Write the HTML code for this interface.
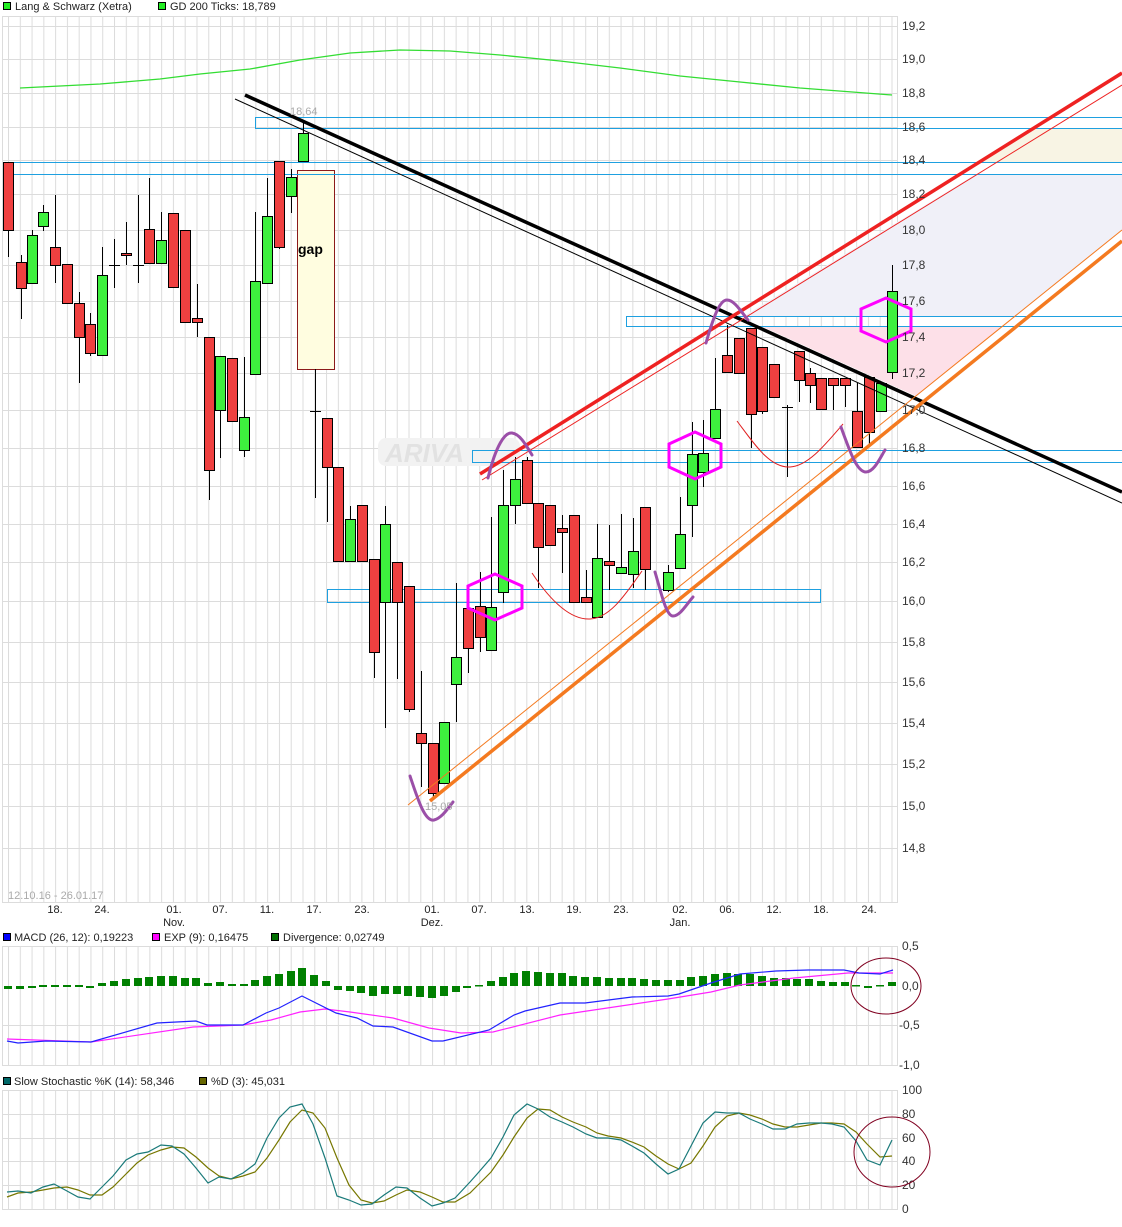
<!DOCTYPE html>
<html><head><meta charset="utf-8">
<style>
html,body{margin:0;padding:0;background:#fff;width:1122px;height:1227px;overflow:hidden}
svg{display:block}
text{font-family:"Liberation Sans",Arial,sans-serif}
</style></head>
<body>
<svg width="1122" height="1227" viewBox="0 0 1122 1227" xmlns="http://www.w3.org/2000/svg">
<defs>
<pattern id="vg" patternUnits="userSpaceOnUse" x="8" y="0" width="11.78" height="10">
<line x1="0.5" y1="0" x2="0.5" y2="10" stroke="#dcdcdc" stroke-width="1"/>
</pattern>
</defs>
<rect width="1122" height="1227" fill="#fff"/>

<!-- legend top -->
<rect x="3.5" y="2.5" width="7" height="7" fill="#22ee22" stroke="#000"/>
<text x="15" y="10" font-size="11" fill="#222">Lang &amp; Schwarz (Xetra)</text>
<rect x="158.5" y="2.5" width="7" height="7" fill="#22ee22" stroke="#000"/>
<text x="170" y="10" font-size="11" fill="#222">GD 200 Ticks: 18,789</text>

<!-- main grid -->
<rect x="2" y="16" width="896" height="886" fill="url(#vg)"/>
<g stroke="#dcdcdc" stroke-width="1">
<line x1="2" y1="16.5" x2="898" y2="16.5"/>
<line x1="2" y1="26.5" x2="898" y2="26.5"/><line x1="2" y1="59.5" x2="898" y2="59.5"/><line x1="2" y1="93.5" x2="898" y2="93.5"/><line x1="2" y1="127.5" x2="898" y2="127.5"/><line x1="2" y1="160.5" x2="898" y2="160.5"/><line x1="2" y1="194.5" x2="898" y2="194.5"/><line x1="2" y1="230.5" x2="898" y2="230.5"/><line x1="2" y1="265.5" x2="898" y2="265.5"/><line x1="2" y1="301.5" x2="898" y2="301.5"/><line x1="2" y1="337.5" x2="898" y2="337.5"/><line x1="2" y1="373.5" x2="898" y2="373.5"/><line x1="2" y1="410.5" x2="898" y2="410.5"/><line x1="2" y1="448.5" x2="898" y2="448.5"/><line x1="2" y1="486.5" x2="898" y2="486.5"/><line x1="2" y1="524.5" x2="898" y2="524.5"/><line x1="2" y1="562.5" x2="898" y2="562.5"/><line x1="2" y1="601.5" x2="898" y2="601.5"/><line x1="2" y1="642.5" x2="898" y2="642.5"/><line x1="2" y1="682.5" x2="898" y2="682.5"/><line x1="2" y1="723.5" x2="898" y2="723.5"/><line x1="2" y1="764.5" x2="898" y2="764.5"/><line x1="2" y1="806.5" x2="898" y2="806.5"/><line x1="2" y1="848.5" x2="898" y2="848.5"/>
<line x1="2" y1="902.5" x2="898" y2="902.5"/>
<line x1="2.5" y1="16" x2="2.5" y2="902"/><line x1="897.5" y1="16" x2="897.5" y2="902"/>
</g>

<!-- shaded zones -->
<polygon points="1034,128 1122,128 1122,163 978,163" fill="#f8f4e4"/>
<polygon points="976,174 1122,174 1122,230 1015,316 744,316" fill="#f0f0f8"/>
<polygon points="763,327 1002,327 916,396" fill="#fde0e8"/>

<!-- gap box -->
<rect x="297.5" y="170.5" width="37" height="199" fill="#fffde0" stroke="#8b1a1a" stroke-width="1"/>
<text x="298" y="254" font-size="14" font-weight="bold" fill="#000">gap</text>

<!-- ARIVA watermark -->
<rect x="378" y="438" width="142" height="28" rx="8" fill="#f2f2f2"/>
<text x="385" y="462" font-size="26" font-weight="bold" font-style="italic" fill="#e2e2e2">ARIVA</text>

<!-- blue S/R boxes -->
<g fill="none" stroke="#1ea0e0" stroke-width="1">
<rect x="255.5" y="117.5" width="867" height="11"/>
<line x1="3" y1="162.5" x2="1122" y2="162.5"/><line x1="3" y1="174.5" x2="1122" y2="174.5"/><line x1="3.5" y1="162" x2="3.5" y2="175"/>
<rect x="626.5" y="316.5" width="496" height="10"/>
<rect x="472.5" y="450.5" width="650" height="12"/>
<rect x="327.5" y="589.5" width="493" height="13"/>
</g>

<!-- GD200 -->
<polyline fill="none" stroke="#33dd33" stroke-width="1.3" points="20,88 100,84 160,79 200,74 250,69 300,60 350,53 400,50 450,51 500,55 560,61 620,68 680,76 740,82 800,88 892,95"/>

<!-- candles -->
<g stroke="#000" stroke-width="1">
<!-- wicks -->
<line x1="8.5" y1="162" x2="8.5" y2="257"/>
<line x1="21.5" y1="255" x2="21.5" y2="319"/>
<line x1="32.5" y1="230" x2="32.5" y2="283"/>
<line x1="43.5" y1="205" x2="43.5" y2="231"/>
<line x1="55.5" y1="195" x2="55.5" y2="283"/>
<line x1="79.5" y1="292" x2="79.5" y2="383"/>
<line x1="90.5" y1="313" x2="90.5" y2="356"/>
<line x1="102.5" y1="247" x2="102.5" y2="355"/>
<line x1="114.5" y1="239" x2="114.5" y2="288"/><line x1="109" y1="265.5" x2="120" y2="265.5"/>
<line x1="126.5" y1="222" x2="126.5" y2="265"/>
<line x1="138.5" y1="195" x2="138.5" y2="283"/><line x1="133" y1="265.5" x2="144" y2="265.5"/>
<line x1="149.5" y1="178" x2="149.5" y2="263"/>
<line x1="161.5" y1="212" x2="161.5" y2="263"/>
<line x1="197.5" y1="284" x2="197.5" y2="337"/>
<line x1="209.5" y1="337" x2="209.5" y2="500"/>
<line x1="220.5" y1="356" x2="220.5" y2="458"/>
<line x1="244.5" y1="357" x2="244.5" y2="457"/>
<line x1="255.5" y1="212" x2="255.5" y2="374"/>
<line x1="267.5" y1="178" x2="267.5" y2="283"/>
<line x1="279.5" y1="161" x2="279.5" y2="249"/>
<line x1="291.5" y1="169" x2="291.5" y2="213"/>
<line x1="303.5" y1="120" x2="303.5" y2="161"/>
<line x1="315.5" y1="369" x2="315.5" y2="498"/><line x1="310" y1="411.5" x2="321" y2="411.5"/>
<line x1="327.5" y1="418" x2="327.5" y2="522"/>
<line x1="350.5" y1="506" x2="350.5" y2="561"/>
<line x1="374.5" y1="559" x2="374.5" y2="678"/>
<line x1="385.5" y1="506" x2="385.5" y2="728"/>
<line x1="397.5" y1="562" x2="397.5" y2="679"/>
<line x1="409.5" y1="586" x2="409.5" y2="712"/>
<line x1="421.5" y1="671" x2="421.5" y2="787"/>
<line x1="433.5" y1="743" x2="433.5" y2="797"/>
<line x1="456.5" y1="583" x2="456.5" y2="722"/>
<line x1="468.5" y1="608" x2="468.5" y2="673"/>
<line x1="480.5" y1="572" x2="480.5" y2="652"/>
<line x1="491.5" y1="517" x2="491.5" y2="650"/>
<line x1="503.5" y1="470" x2="503.5" y2="603"/>
<line x1="515.5" y1="457" x2="515.5" y2="524"/>
<line x1="527.5" y1="457" x2="527.5" y2="503"/>
<line x1="538.5" y1="503" x2="538.5" y2="588"/>
<line x1="562.5" y1="515" x2="562.5" y2="573"/>
<line x1="586.5" y1="570" x2="586.5" y2="602"/>
<line x1="597.5" y1="524" x2="597.5" y2="617"/>
<line x1="609.5" y1="525" x2="609.5" y2="590"/>
<line x1="621.5" y1="514" x2="621.5" y2="573"/>
<line x1="633.5" y1="518" x2="633.5" y2="588"/>
<line x1="645.5" y1="507" x2="645.5" y2="590"/>
<line x1="668.5" y1="565" x2="668.5" y2="592"/>
<line x1="680.5" y1="497" x2="680.5" y2="568"/>
<line x1="692.5" y1="422" x2="692.5" y2="537"/>
<line x1="703.5" y1="420" x2="703.5" y2="487"/>
<line x1="715.5" y1="358" x2="715.5" y2="438"/>
<line x1="727.5" y1="325" x2="727.5" y2="372"/>
<line x1="751.5" y1="328" x2="751.5" y2="448"/>
<line x1="762.5" y1="347" x2="762.5" y2="414"/>
<line x1="787.5" y1="405" x2="787.5" y2="477"/><line x1="782" y1="407.5" x2="793" y2="407.5"/>
<line x1="799.5" y1="351" x2="799.5" y2="402"/>
<line x1="810.5" y1="368" x2="810.5" y2="403"/>
<line x1="833.5" y1="378" x2="833.5" y2="410"/>
<line x1="845.5" y1="378" x2="845.5" y2="407"/>
<line x1="857.5" y1="383" x2="857.5" y2="447"/>
<line x1="869.5" y1="377" x2="869.5" y2="447"/>
<line x1="892.5" y1="265" x2="892.5" y2="379"/>
</g>
<g stroke="#000" stroke-width="1" fill="#ef4040">
<rect x="3.5" y="162.5" width="10" height="68"/>
<rect x="16.5" y="262.5" width="10" height="26"/>
<rect x="50.5" y="247.5" width="10" height="18"/>
<rect x="62.5" y="264.5" width="10" height="39"/>
<rect x="74.5" y="303.5" width="10" height="34"/>
<rect x="85.5" y="324.5" width="10" height="29"/>
<rect x="121.5" y="253.5" width="10" height="2"/>
<rect x="144.5" y="229.5" width="10" height="34"/>
<rect x="168.5" y="213.5" width="10" height="74"/>
<rect x="180.5" y="230.5" width="10" height="92"/>
<rect x="192.5" y="318.5" width="10" height="4"/>
<rect x="204.5" y="337.5" width="10" height="133"/>
<rect x="227.5" y="358.5" width="10" height="63"/>
<rect x="274.5" y="161.5" width="10" height="86"/>
<rect x="322.5" y="418.5" width="10" height="49"/>
<rect x="333.5" y="467.5" width="10" height="94"/>
<rect x="357.5" y="505.5" width="10" height="56"/>
<rect x="369.5" y="559.5" width="10" height="93"/>
<rect x="392.5" y="562.5" width="10" height="40"/>
<rect x="404.5" y="586.5" width="10" height="123"/>
<rect x="416.5" y="733.5" width="10" height="10"/>
<rect x="428.5" y="743.5" width="10" height="50"/>
<rect x="463.5" y="608.5" width="10" height="40"/>
<rect x="475.5" y="606.5" width="10" height="31"/>
<rect x="522.5" y="460.5" width="10" height="43"/>
<rect x="533.5" y="503.5" width="10" height="44"/>
<rect x="545.5" y="505.5" width="10" height="40"/>
<rect x="557.5" y="528.5" width="10" height="4"/>
<rect x="569.5" y="515.5" width="10" height="87"/>
<rect x="581.5" y="597.5" width="10" height="5"/>
<rect x="604.5" y="561.5" width="10" height="4"/>
<rect x="640.5" y="507.5" width="10" height="62"/>
<rect x="722.5" y="355.5" width="10" height="17"/>
<rect x="734.5" y="338.5" width="10" height="35"/>
<rect x="746.5" y="328.5" width="10" height="86"/>
<rect x="757.5" y="347.5" width="10" height="64"/>
<rect x="769.5" y="364.5" width="10" height="33"/>
<rect x="794.5" y="351.5" width="10" height="29"/>
<rect x="805.5" y="373.5" width="10" height="12"/>
<rect x="816.5" y="378.5" width="10" height="31"/>
<rect x="828.5" y="378.5" width="10" height="7"/>
<rect x="840.5" y="378.5" width="10" height="7"/>
<rect x="852.5" y="411.5" width="10" height="36"/>
<rect x="864.5" y="377.5" width="10" height="55"/>
</g>
<g stroke="#000" stroke-width="1" fill="#3ef03e">
<rect x="27.5" y="235.5" width="10" height="48"/>
<rect x="38.5" y="212.5" width="10" height="14"/>
<rect x="97.5" y="275.5" width="10" height="80"/>
<rect x="156.5" y="240.5" width="10" height="23"/>
<rect x="215.5" y="356.5" width="10" height="54"/>
<rect x="239.5" y="417.5" width="10" height="33"/>
<rect x="250.5" y="281.5" width="10" height="93"/>
<rect x="262.5" y="216.5" width="10" height="67"/>
<rect x="286.5" y="177.5" width="10" height="19"/>
<rect x="298.5" y="133.5" width="10" height="28"/>
<rect x="345.5" y="519.5" width="10" height="42"/>
<rect x="380.5" y="524.5" width="10" height="78"/>
<rect x="439.5" y="722.5" width="10" height="61"/>
<rect x="451.5" y="657.5" width="10" height="27"/>
<rect x="486.5" y="607.5" width="10" height="43"/>
<rect x="498.5" y="505.5" width="10" height="87"/>
<rect x="510.5" y="479.5" width="10" height="26"/>
<rect x="592.5" y="558.5" width="10" height="59"/>
<rect x="616.5" y="567.5" width="10" height="6"/>
<rect x="628.5" y="551.5" width="10" height="23"/>
<rect x="663.5" y="572.5" width="10" height="18"/>
<rect x="675.5" y="534.5" width="10" height="34"/>
<rect x="687.5" y="454.5" width="10" height="51"/>
<rect x="698.5" y="453.5" width="10" height="19"/>
<rect x="710.5" y="409.5" width="10" height="29"/>
<rect x="876.5" y="383.5" width="10" height="28"/>
<rect x="887.5" y="291.5" width="10" height="81"/>
</g>

<!-- trend lines -->
<line x1="245" y1="95" x2="1122" y2="492" stroke="#000" stroke-width="3.5"/>
<line x1="235" y1="99" x2="1122" y2="503" stroke="#000" stroke-width="1"/>
<line x1="480" y1="474" x2="1122" y2="73" stroke="#ee2222" stroke-width="3.5"/>
<line x1="482" y1="480" x2="1122" y2="85" stroke="#ee2222" stroke-width="1"/>
<line x1="430" y1="801" x2="1122" y2="241" stroke="#f47a20" stroke-width="3.5"/>
<line x1="408" y1="805" x2="1122" y2="230" stroke="#f47a20" stroke-width="1"/>

<!-- thin red arcs -->
<path d="M532,573 C550,600 570,620 590,619 C610,618 625,595 642,571" fill="none" stroke="#e02020" stroke-width="1"/>
<path d="M737,421 C755,445 770,468 790,467 C808,466 825,445 843,424" fill="none" stroke="#e02020" stroke-width="1"/>

<!-- purple arcs -->
<g fill="none" stroke="#9b4fa8" stroke-width="3" stroke-linecap="round">
<path d="M410,776 C418,800 425,822 434,820 C442,818 448,808 453,802"/>
<path d="M488,478 C496,445 505,432 512,433 C520,434 526,445 532,455"/>
<path d="M706,343 C714,315 720,300 727,300 C734,300 740,310 748,320"/>
<path d="M841,427 C850,452 857,472 866,472 C874,472 880,458 885,450"/>
<path d="M655,572 C661,592 666,616 673,616 C680,616 686,605 693,597"/>
</g>

<!-- hexagons -->
<g fill="none" stroke="#ff00ff" stroke-width="3">
<polygon points="495,574 522,586 522,608 495,620 468,608 468,586"/>
<polygon points="695,432 721,444 721,467 695,479 669,467 669,444"/>
<polygon points="886,298 911,309 911,331 886,342 861,331 861,309"/>
</g>

<text x="290" y="115" font-size="11" fill="#aaa">18,64</text>
<text x="425" y="810" font-size="11" fill="#aaa">15,05</text>
<text x="8" y="899" font-size="11" fill="#aaa">12.10.16 - 26.01.17</text>

<!-- y axis labels -->
<g font-size="12" fill="#333">
<text x="902" y="30">19,2</text><text x="902" y="63">19,0</text><text x="902" y="97">18,8</text><text x="902" y="131">18,6</text><text x="902" y="164">18,4</text><text x="902" y="198">18,2</text><text x="902" y="234">18,0</text><text x="902" y="269">17,8</text><text x="902" y="305">17,6</text><text x="902" y="341">17,4</text><text x="902" y="377">17,2</text><text x="902" y="414">17,0</text><text x="902" y="452">16,8</text><text x="902" y="490">16,6</text><text x="902" y="528">16,4</text><text x="902" y="566">16,2</text><text x="902" y="605">16,0</text><text x="902" y="646">15,8</text><text x="902" y="686">15,6</text><text x="902" y="727">15,4</text><text x="902" y="768">15,2</text><text x="902" y="810">15,0</text><text x="902" y="852">14,8</text>
</g>

<!-- x axis labels -->
<g font-size="11" fill="#222" text-anchor="middle">
<text x="55" y="913">18.</text><text x="102" y="913">24.</text><text x="174" y="913">01.</text><text x="220" y="913">07.</text><text x="267" y="913">11.</text><text x="314" y="913">17.</text><text x="362" y="913">23.</text><text x="432" y="913">01.</text><text x="479" y="913">07.</text><text x="527" y="913">13.</text><text x="574" y="913">19.</text><text x="621" y="913">23.</text><text x="680" y="913">02.</text><text x="727" y="913">06.</text><text x="774" y="913">12.</text><text x="821" y="913">18.</text><text x="869" y="913">24.</text>
<text x="174" y="926">Nov.</text><text x="432" y="926">Dez.</text><text x="680" y="926">Jan.</text>
</g>

<!-- MACD legend -->
<rect x="3.5" y="933.5" width="7" height="7" fill="#0000ff" stroke="#000"/>
<text x="14" y="941" font-size="11" fill="#222">MACD (26, 12): 0,19223</text>
<rect x="152.5" y="933.5" width="7" height="7" fill="#ff00ff" stroke="#000"/>
<text x="164" y="941" font-size="11" fill="#222">EXP (9): 0,16475</text>
<rect x="271.5" y="933.5" width="7" height="7" fill="#007000" stroke="#000"/>
<text x="283" y="941" font-size="11" fill="#222">Divergence: 0,02749</text>

<!-- MACD grid -->
<rect x="2" y="946" width="896" height="119" fill="url(#vg)"/>
<g stroke="#dcdcdc">
<line x1="2" y1="946.5" x2="898" y2="946.5"/><line x1="2" y1="1025.5" x2="898" y2="1025.5"/><line x1="2" y1="1065.5" x2="898" y2="1065.5"/>
<line x1="2.5" y1="946" x2="2.5" y2="1065"/><line x1="897.5" y1="946" x2="897.5" y2="1065"/>
</g>
<g font-size="12" fill="#333">
<text x="902" y="950">0,5</text><text x="902" y="990">0,0</text><text x="899" y="1029">-0,5</text><text x="899" y="1069">-1,0</text>
</g>
<!-- histogram -->
<g fill="#008000">
<rect x="4" y="986" width="8" height="3"/><rect x="16" y="986" width="8" height="3"/><rect x="28" y="986" width="8" height="2"/><rect x="39" y="985" width="8" height="2"/><rect x="51" y="985" width="8" height="2"/><rect x="63" y="985" width="8" height="2"/><rect x="75" y="985" width="8" height="2"/><rect x="86" y="986" width="8" height="2"/><rect x="98" y="983" width="8" height="3"/><rect x="110" y="981" width="8" height="5"/><rect x="122" y="979" width="8" height="7"/><rect x="134" y="978" width="8" height="8"/><rect x="145" y="977" width="8" height="9"/><rect x="157" y="976" width="8" height="10"/><rect x="169" y="976" width="8" height="10"/><rect x="181" y="978" width="8" height="8"/><rect x="192" y="978" width="8" height="8"/><rect x="204" y="983" width="8" height="3"/><rect x="216" y="982" width="8" height="4"/><rect x="228" y="984" width="8" height="2"/><rect x="240" y="984" width="8" height="2"/><rect x="251" y="980" width="8" height="6"/><rect x="263" y="976" width="8" height="10"/><rect x="275" y="974" width="8" height="12"/><rect x="287" y="971" width="8" height="15"/><rect x="298" y="968" width="8" height="18"/><rect x="310" y="975" width="8" height="11"/><rect x="322" y="981" width="8" height="5"/><rect x="334" y="986" width="8" height="4"/><rect x="346" y="986" width="8" height="5"/><rect x="357" y="986" width="8" height="7"/><rect x="369" y="986" width="8" height="10"/><rect x="381" y="986" width="8" height="8"/><rect x="393" y="986" width="8" height="8"/><rect x="404" y="986" width="8" height="10"/><rect x="416" y="986" width="8" height="11"/><rect x="428" y="986" width="8" height="12"/><rect x="440" y="986" width="8" height="10"/><rect x="452" y="986" width="8" height="6"/><rect x="463" y="986" width="8" height="2"/><rect x="475" y="985" width="8" height="1.5"/><rect x="487" y="981" width="8" height="5"/><rect x="499" y="977" width="8" height="9"/><rect x="510" y="973" width="8" height="13"/><rect x="522" y="971" width="8" height="15"/><rect x="534" y="972" width="8" height="14"/><rect x="546" y="973" width="8" height="13"/><rect x="558" y="973" width="8" height="13"/><rect x="569" y="976" width="8" height="10"/><rect x="581" y="977" width="8" height="9"/><rect x="593" y="977" width="8" height="9"/><rect x="605" y="978" width="8" height="8"/><rect x="617" y="978" width="8" height="8"/><rect x="628" y="978" width="8" height="8"/><rect x="640" y="979" width="8" height="7"/><rect x="652" y="980" width="8" height="6"/><rect x="664" y="980" width="8" height="6"/><rect x="676" y="980" width="8" height="6"/><rect x="687" y="977" width="8" height="9"/><rect x="699" y="976" width="8" height="10"/><rect x="711" y="974" width="8" height="12"/><rect x="723" y="973" width="8" height="13"/><rect x="734" y="974" width="8" height="12"/><rect x="746" y="974" width="8" height="12"/><rect x="758" y="976" width="8" height="10"/><rect x="770" y="978" width="8" height="8"/><rect x="782" y="978" width="8" height="8"/><rect x="793" y="979" width="8" height="7"/><rect x="805" y="979" width="8" height="7"/><rect x="817" y="981" width="8" height="5"/><rect x="829" y="982" width="8" height="4"/><rect x="841" y="982" width="8" height="4"/><rect x="852" y="985" width="8" height="1.5"/><rect x="864" y="986" width="8" height="2"/><rect x="876" y="985" width="8" height="1.5"/><rect x="888" y="982" width="8" height="4"/>
</g>
<polyline fill="none" stroke="#ff22ff" stroke-width="1.2" points="7,1039 91,1042 193,1027 243,1025 271,1020 300,1012 325,1009 350,1012 393,1018 429,1028 461,1033 493,1032 560,1015 668,999 711,992 740,985 794,978 848,973 893,973"/>
<polyline fill="none" stroke="#2222ff" stroke-width="1.2" points="7,1041 18,1043 46,1041 91,1042 157,1023 196,1021 207,1025 243,1025 266,1013 279,1008 302,996 336,1013 357,1018 373,1026 393,1027 432,1041 443,1041 489,1030 514,1015 525,1011 560,1003 585,1003 632,997 668,996 679,994 711,983 740,974 776,971 808,970 844,970 859,973 880,974 893,970"/>
<ellipse cx="886" cy="986" rx="35" ry="28" fill="none" stroke="#800020" stroke-width="1"/>

<!-- Stoch legend -->
<rect x="3.5" y="1077.5" width="7" height="7" fill="#006868" stroke="#000"/>
<text x="14" y="1085" font-size="11" fill="#222">Slow Stochastic %K (14): 58,346</text>
<rect x="199.5" y="1077.5" width="7" height="7" fill="#666600" stroke="#000"/>
<text x="211" y="1085" font-size="11" fill="#222">%D (3): 45,031</text>

<!-- Stoch grid -->
<rect x="2" y="1090" width="896" height="119" fill="url(#vg)"/>
<g stroke="#dcdcdc">
<line x1="2" y1="1090.5" x2="898" y2="1090.5"/><line x1="2" y1="1114.5" x2="898" y2="1114.5"/><line x1="2" y1="1138.5" x2="898" y2="1138.5"/><line x1="2" y1="1161.5" x2="898" y2="1161.5"/><line x1="2" y1="1185.5" x2="898" y2="1185.5"/><line x1="2" y1="1209.5" x2="898" y2="1209.5"/>
<line x1="2.5" y1="1090" x2="2.5" y2="1209"/><line x1="897.5" y1="1090" x2="897.5" y2="1209"/>
</g>
<g font-size="12" fill="#333">
<text x="902" y="1094">100</text><text x="902" y="1118">80</text><text x="902" y="1142">60</text><text x="902" y="1165">40</text><text x="902" y="1189">20</text><text x="902" y="1213">0</text>
</g>
<polyline fill="none" stroke="#777700" stroke-width="1.2" points="7,1197 18,1193 31,1192 43,1190 54,1188 67,1187 78,1190 90,1195 102,1195 113,1187 126,1174 137,1163 148,1155 161,1150 172,1147 184,1148 196,1157 208,1168 219,1176 231,1179 243,1176 255,1172 267,1158 279,1140 290,1122 302,1110 313,1113 325,1128 337,1158 349,1185 361,1200 372,1203 384,1201 396,1195 407,1190 420,1192 432,1197 443,1202 455,1202 470,1193 478,1185 491,1172 503,1155 514,1137 527,1118 538,1109 550,1110 562,1117 573,1122 586,1127 597,1133 608,1136 621,1138 632,1142 644,1147 656,1156 668,1164 679,1169 691,1163 703,1146 715,1127 727,1116 739,1113 750,1115 762,1119 773,1124 785,1127 797,1127 809,1125 821,1123 832,1123 844,1124 856,1132 867,1144 880,1157 892,1156"/>
<polyline fill="none" stroke="#1a7a7a" stroke-width="1.2" points="7,1192 18,1191 31,1193 43,1187 54,1184 67,1191 78,1197 90,1199 102,1187 113,1176 126,1160 137,1154 148,1152 161,1145 172,1146 184,1154 196,1168 208,1183 219,1177 231,1179 243,1173 255,1164 267,1138 279,1118 290,1107 302,1104 313,1124 325,1158 337,1196 349,1200 361,1205 372,1204 384,1195 396,1187 407,1188 420,1198 432,1206 443,1203 455,1198 470,1182 478,1173 491,1158 503,1137 514,1115 527,1104 538,1109 550,1117 562,1122 573,1127 586,1134 597,1138 608,1138 621,1140 632,1146 644,1153 656,1164 668,1174 679,1169 691,1146 703,1123 715,1112 727,1113 739,1113 750,1119 762,1124 773,1129 785,1129 797,1124 809,1123 821,1123 832,1124 844,1127 856,1141 867,1160 880,1165 892,1140"/>
<ellipse cx="892" cy="1152" rx="38" ry="35" fill="none" stroke="#800020" stroke-width="1"/>
</svg>
</body></html>
